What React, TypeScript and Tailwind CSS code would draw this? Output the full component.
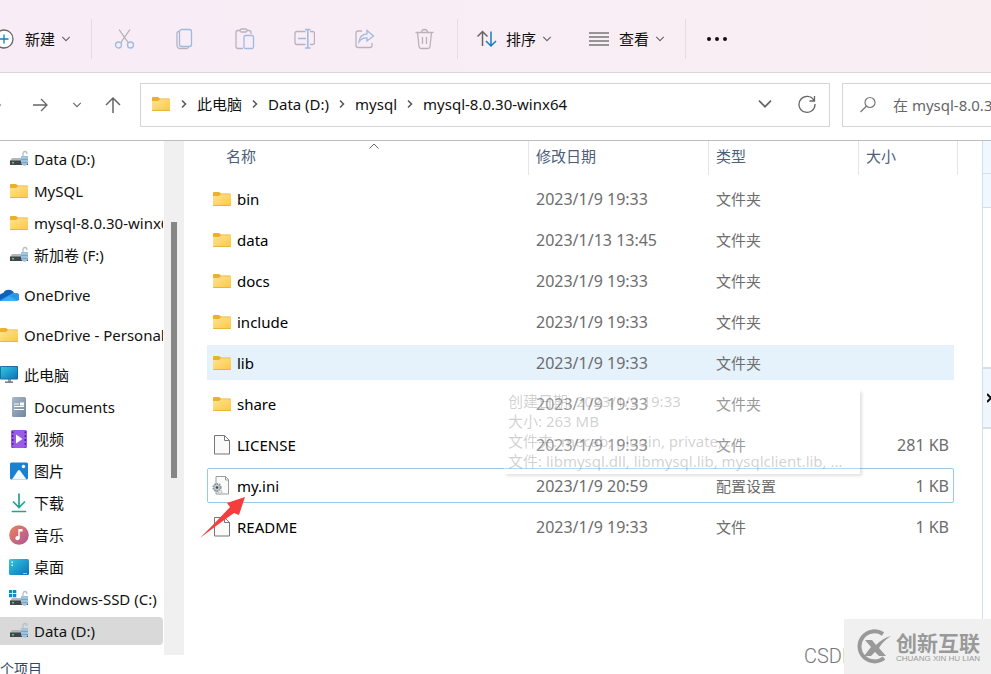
import type { ReactNode } from 'react';

type IconProps = { className?: string };

const Chevron = ({ className = '' }: IconProps) => (
  <svg viewBox="0 0 12 12" fill="none" stroke="currentColor" strokeWidth="1.300" className={`shrink-0 ${className}`}>
    <path d="M1.500 3.500 6 8l4.500-4.500" />
  </svg>
);

const CrumbArrow = () => (
  <svg viewBox="0 0 8 12" fill="none" stroke="#555" strokeWidth="1.500" className="h-3 w-2 shrink-0">
    <path d="M2 2.500 5.500 6 2 9.500" />
  </svg>
);

// clipped: the root nodes of the sidebar touch the window edge
const FolderIcon = ({ clipped = false }: { clipped?: boolean }) => (
  <svg viewBox={clipped ? '1 0 19 16' : '0 0 20 16'} className={`h-4 shrink-0 ${clipped ? 'w-[19px]' : 'w-5'}`}>
    <defs>
      <linearGradient id="folder" x1="0" y1="0" x2="1" y2="1">
        <stop offset="0" stopColor="#ffe394" />
        <stop offset="1" stopColor="#fbc843" />
      </linearGradient>
    </defs>
    <path d="M1 2q0-1 1-1h5l2 1.500h9q1 0 1 1V8H1z" fill="#ecb02c" />
    <path d="M1 5h6l2-1.800h10V14q0 1-1 1H2q-1 0-1-1z" fill="url(#folder)" />
    <path d="M1 14h18q0 1-1 1H2q-1 0-1-1z" fill="#eab53a" />
  </svg>
);

const DriveIcon = ({ system = false }: { system?: boolean }) => (
  <svg viewBox="0 0 20 18" className="h-[18px] w-5 shrink-0">
    <path d="M3 8h14l2 3H1z" fill="#b3b7bb" />
    <path d="M1 10.500h18V15H1z" fill="#40464b" />
    <path d="M3 12h2v1.500H3z" fill="#59d06b" />
    <path d="M14 7V4q0-2.500 2-2.500T18 4" fill="none" stroke="#b4c2cc" strokeWidth="1.300" />
    <path d="M12 6h7v7q-1 2.500-3.500 3Q13 15.500 12 13z" fill="#9fc3dc" />
    <path d="M12 9.500h7M12 12.500h7" stroke="#6f9dbd" strokeWidth=".8" />
    {system && (
      <path d="M0 0h3.300v3.300H0zM4 0h3.300v3.300H4zM0 4h3.300v3.300H0zM4 4h3.300v3.300H4z" fill="#1389c4" />
    )}
  </svg>
);

const CloudIcon = () => (
  <svg viewBox="1 0 19 14" className="h-3.5 w-[19px] shrink-0">
    <path d="M1 13V6.500Q2.500 5 4.300 5A6 6 0 0 1 15 5l1 8z" fill="#0d62bd" />
    <path d="M1 12 12 6q2-2 4-.8a4 4 0 0 1 3 7.300q-1 .5-2 .5H1z" fill="#2997e6" />
    <path d="m3 12.500 7-4.500 8.500 4.500q-1 .5-2 .5H4z" fill="#36b1f1" />
  </svg>
);

const PcIcon = () => (
  <svg viewBox="1 0 19 18" className="h-[18px] w-[19px] shrink-0">
    <defs>
      <linearGradient id="screen" x1="0" y1="0" x2="1" y2="1">
        <stop offset="0" stopColor="#32c8dc" />
        <stop offset="1" stopColor="#0b72bd" />
      </linearGradient>
    </defs>
    <path d="M9 13h3v3H9z" fill="#9aa5ad" />
    <path d="M6 15.500h8v1.200H6z" fill="#53616b" />
    <rect x="1" y="0" width="18" height="13.500" rx="1" fill="#17618f" />
    <rect x="1.800" y=".8" width="16.400" height="11.900" fill="url(#screen)" />
  </svg>
);

const DocumentsIcon = () => (
  <svg viewBox="0 0 20 20" className="size-5 shrink-0">
    <defs>
      <linearGradient id="doc" x1="0" y1="0" x2="1" y2="1">
        <stop offset="0" stopColor="#a9b9ca" />
        <stop offset="1" stopColor="#71869e" />
      </linearGradient>
    </defs>
    <rect x="3" y="0" width="14" height="20" rx="1.500" fill="url(#doc)" />
    <path d="M5 7h5M5 9.500h10M5 12.500h10" stroke="#fff" strokeWidth="1.200" />
    <rect x="11" y="5.500" width="4" height="3" fill="#fff" />
  </svg>
);

const VideoIcon = () => (
  <svg viewBox="0 0 20 20" className="size-5 shrink-0">
    <rect x="2" y="1" width="16" height="18" rx="1.500" fill="#9a5ce6" />
    <path d="M3.700 2.500v16M16.300 2.500v16" stroke="#4a2390" strokeWidth="1.600" strokeDasharray="1.800 2" />
    <path d="M7 5.500 13.500 10 7 14.500z" fill="#fff" />
  </svg>
);

const PicturesIcon = () => (
  <svg viewBox="0 0 20 20" className="size-5 shrink-0">
    <rect x="1" y="1.500" width="18" height="17" rx="1.500" fill="#1b80cf" />
    <path d="m3 18.500 6-9q1-1 2 0l6.500 9z" fill="#f2f9ff" />
    <circle cx="14.500" cy="5.500" r="1.700" fill="#fff" />
  </svg>
);

const DownloadIcon = () => (
  <svg viewBox="0 0 20 20" fill="none" stroke="#1fa58c" strokeWidth="1.700" strokeLinecap="round" className="size-5 shrink-0">
    <path d="M10 1v13M4.500 9l5.500 5.500L15.500 9M3.500 18.500h13" />
  </svg>
);

const MusicIcon = () => (
  <svg viewBox="0 0 20 20" className="size-5 shrink-0">
    <defs>
      <linearGradient id="music" x1="0" y1="0" x2="1" y2="1">
        <stop offset="0" stopColor="#ee8355" />
        <stop offset="1" stopColor="#a9559f" />
      </linearGradient>
    </defs>
    <circle cx="10" cy="10" r="9.800" fill="url(#music)" />
    <path d="M10 4v9" stroke="#fff" strokeWidth="1.400" />
    <path d="M10 4h3.500v2.500H10z" fill="#fff" />
    <circle cx="8.500" cy="13.200" r="2.100" fill="#fff" />
  </svg>
);

const DesktopIcon = () => (
  <svg viewBox="0 0 20 18" className="h-[18px] w-5 shrink-0">
    <rect x="0" y="1" width="20" height="16" rx="1.500" fill="url(#screen)" />
    <path d="M2.500 3.500h1.500v1.500H2.500zM2.500 6.500h1.500V8H2.500z" fill="#fff" />
    <path d="M14.500 15.500h1.200M16.500 15.500h1.200" stroke="#fff" />
  </svg>
);

const FileIcon = ({ gear = false }: { gear?: boolean }) => (
  <svg viewBox="0 0 20 22" fill="none" className="h-[22px] w-5 shrink-0">
    {gear ? (
      <>
        <path d="M4 1.500h9.500l3 3V19H4z" fill="#fafafa" stroke="#989ca0" />
        <path d="M13.500 1.500v3.500h3" stroke="#989ca0" />
        <circle cx="5" cy="12.500" r="3.600" fill="#c9d0d4" stroke="#8b9499" strokeWidth="2" strokeDasharray="1.500 .8" />
        <circle cx="5" cy="12.500" r="1.300" fill="#39444a" />
        <circle cx="8" cy="17" r="2" fill="#dfe3e5" stroke="#a3abb0" strokeDasharray="1 .6" />
      </>
    ) : (
      <path d="M2.500 1.500h10l5 5v13.500h-15zM12.500 1.500v5h5" fill="#fafafa" stroke="#777" />
    )}
  </svg>
);

const tools: { label: string; icon: ReactNode }[] = [
  {
    label: '剪切',
    icon: (
      <>
        <path d="M5 1.500 14.500 15M16 1.500 6.500 15" stroke="#b3adb8" />
        <circle cx="4.500" cy="17" r="3" stroke="#9dbbe0" />
        <circle cx="16.500" cy="17" r="3" stroke="#9dbbe0" />
      </>
    ),
  },
  {
    label: '复制',
    icon: (
      <>
        <path d="M5 3.500q-2 0-2 2V17q0 3.500 3.500 3.500h6q2 0 2-1.500" stroke="#b8b2be" />
        <rect x="5.500" y="1.500" width="12" height="17" rx="2" stroke="#9dbbe0" />
      </>
    ),
  },
  {
    label: '粘贴',
    icon: (
      <>
        <path d="M9 20.500H4q-2 0-2-2V4.500q0-2 2-2h2M13 2.500h2q2 0 2 2V6" stroke="#b8b2be" />
        <rect x="6" y="1" width="7" height="3" rx="1.500" stroke="#b8b2be" />
        <rect x="10" y="7.500" width="9.500" height="13" rx="1.500" stroke="#9dbbe0" />
      </>
    ),
  },
  {
    label: '重命名',
    icon: (
      <>
        <path d="M11.500 3.500H3q-2 0-2 2v9q0 2 2 2h8.500M16 3.500h2.500q2 0 2 2v9q0 2-2 2H16" stroke="#b8b2be" />
        <path d="M11 1.500h5.500M11 20h5.500M13.800 1.500V20M4 10.500h8" stroke="#9dbbe0" strokeWidth="1.600" />
      </>
    ),
  },
  {
    label: '共享',
    icon: (
      <>
        <path d="M8 3H4Q2 3 2 5v12.500q0 2 2 2h12q2 0 2-2V15" stroke="#b8b2be" />
        <path d="M13 2.500 19.500 8 13 13v-3q-5-.5-8 4Q5.500 6.500 13 5.800z" stroke="#9dbbe0" />
      </>
    ),
  },
  {
    label: '删除',
    icon: (
      <path
        d="M1.500 4.500h18M7.500 4.500q0-3 3-3t3 3M3.500 4.500 5 18.500q.2 2 2 2h7q1.800 0 2-2l1.500-14M8.500 9v7M12.500 9v7"
        stroke="#b9b3b9"
      />
    ),
  },
];

interface NavItem {
  label: string;
  icon: ReactNode;
  root?: boolean;
  active?: boolean;
}

const navItems: NavItem[] = [
  { label: 'Data (D:)', icon: <DriveIcon /> },
  { label: 'MySQL', icon: <FolderIcon /> },
  { label: 'mysql-8.0.30-winx64', icon: <FolderIcon /> },
  { label: '新加卷 (F:)', icon: <DriveIcon /> },
  { label: 'OneDrive', icon: <CloudIcon />, root: true },
  { label: 'OneDrive - Personal', icon: <FolderIcon clipped />, root: true },
  { label: '此电脑', icon: <PcIcon />, root: true },
  { label: 'Documents', icon: <DocumentsIcon /> },
  { label: '视频', icon: <VideoIcon /> },
  { label: '图片', icon: <PicturesIcon /> },
  { label: '下载', icon: <DownloadIcon /> },
  { label: '音乐', icon: <MusicIcon /> },
  { label: '桌面', icon: <DesktopIcon /> },
  { label: 'Windows-SSD (C:)', icon: <DriveIcon system /> },
  { label: 'Data (D:)', icon: <DriveIcon />, active: true },
  { label: '新加卷 (F:)', icon: <DriveIcon /> },
];

interface FileRow {
  name: string;
  date: string;
  type: string;
  size?: string;
}

const files: FileRow[] = [
  { name: 'bin', date: '2023/1/9 19:33', type: '文件夹' },
  { name: 'data', date: '2023/1/13 13:45', type: '文件夹' },
  { name: 'docs', date: '2023/1/9 19:33', type: '文件夹' },
  { name: 'include', date: '2023/1/9 19:33', type: '文件夹' },
  { name: 'lib', date: '2023/1/9 19:33', type: '文件夹' },
  { name: 'share', date: '2023/1/9 19:33', type: '文件夹' },
  { name: 'LICENSE', date: '2023/1/9 19:33', type: '文件', size: '281 KB' },
  { name: 'my.ini', date: '2023/1/9 20:59', type: '配置设置', size: '1 KB' },
  { name: 'README', date: '2023/1/9 19:33', type: '文件', size: '1 KB' },
];

const rowStyle = (name: string) => {
  if (name === 'lib') return 'bg-[#e5f2fc]';
  if (name === 'my.ini') return 'rounded-xs outline-1 -outline-offset-1 outline-[color:#99c9e6]';
  return '';
};

const Divider = () => <span className="h-10 w-px shrink-0 bg-[#e6dbe3]" />;

const CommandBar = () => (
  <header className="flex h-[73px] shrink-0 items-center border-b border-[#d9d5d9] bg-linear-to-r from-[#f8edf7] to-[#f9eef2] pb-1 pt-2.5">
    <button className="flex w-[91px] items-center">
      <svg viewBox="6 0 14 20" fill="none" className="h-5 w-3.5">
        <circle cx="10" cy="10" r="9" fill="#fff" stroke="#666" strokeWidth="1.300" />
        <path d="M10 5.500v9M5.500 10h9" stroke="#1181c4" strokeWidth="1.300" />
      </svg>
      <span className="ml-[11px]">新建</span>
      <Chevron className="ml-1.5 size-2.5 text-[#666]" />
    </button>
    <Divider />
    <div className="flex pl-0.5 pr-[3px]">
      {tools.map((tool) => (
        <button key={tool.label} aria-label={tool.label} className="flex w-[60px] justify-center">
          <svg viewBox="0 0 21 22" fill="none" strokeWidth="1.300" className="h-[22px] w-[21px]">
            {tool.icon}
          </svg>
        </button>
      ))}
    </div>
    <Divider />
    <button className="ml-4 flex w-[115px] items-center pl-0.5">
      <svg viewBox="0 0 22 20" fill="none" strokeWidth="1.500" className="h-5 w-[22px]">
        <path d="M6.500 17V2.500M1.500 7.500l5-5 5 5" stroke="#666" />
        <path d="M15 2.500V17M10 12l5 5 5-5" stroke="#1181c4" />
      </svg>
      <span className="ml-2">排序</span>
      <Chevron className="ml-1.5 size-2.5 text-[#666]" />
    </button>
    <button className="flex w-24 items-center">
      <svg viewBox="0 0 20 16" stroke="#777" strokeWidth="1.300" className="h-4 w-5">
        <path d="M0 2h20M0 6h20M0 10h20M0 14h20" />
      </svg>
      <span className="ml-2.5">查看</span>
      <Chevron className="ml-1.5 size-2.5 text-[#666]" />
    </button>
    <Divider />
    <button aria-label="更多" className="flex w-[62px] justify-center">
      <svg viewBox="0 0 22 6" fill="#111" className="h-1.5 w-[22px]">
        <circle cx="3" cy="3" r="2" />
        <circle cx="11" cy="3" r="2" />
        <circle cx="19" cy="3" r="2" />
      </svg>
    </button>
  </header>
);

const crumbs = ['此电脑', 'Data (D:)', 'mysql', 'mysql-8.0.30-winx64'];

const AddressBar = () => (
  <div className="flex h-[68px] shrink-0 items-start border-b border-[#bdbdbd] pt-2.5">
    <nav className="flex h-11 w-[140px] shrink-0 items-center text-[#666]">
      <button aria-label="后退" className="w-8">
        <svg viewBox="0 0 4 4" fill="#aaa" className="size-1">
          <circle cx="0" cy="2" r="1.200" />
        </svg>
      </button>
      <button aria-label="前进">
        <svg viewBox="0 0 16 16" fill="none" stroke="currentColor" strokeWidth="1.300" className="size-4">
          <path d="M1 8h14M9 2l6 6-6 6" />
        </svg>
      </button>
      <button aria-label="最近" className="ml-6">
        <Chevron className="size-2.5" />
      </button>
      <button aria-label="向上" className="ml-[22px]">
        <svg viewBox="0 0 18 18" fill="none" stroke="currentColor" strokeWidth="1.500" className="size-[18px]">
          <path d="M9 17V2M2 9l7-7 7 7" />
        </svg>
      </button>
    </nav>
    <div className="flex h-11 min-w-0 flex-1 items-center border border-[#d5d5d5] pb-0.5 pl-2.5 pr-3">
      <FolderIcon />
      {crumbs.map((crumb) => (
        <div key={crumb} className="flex items-center whitespace-nowrap">
          <span className="mx-[9px]">
            <CrumbArrow />
          </span>
          <button>{crumb}</button>
        </div>
      ))}
      <button aria-label="历史" className="ml-auto text-[#666]">
        <Chevron className="size-4" />
      </button>
      <button aria-label="刷新" className="ml-6">
        <svg viewBox="0 0 20 20" fill="none" stroke="#666" strokeWidth="1.300" className="size-5">
          <path d="M17 6.500A8 8 0 1 0 18 10M17.500 2v5h-5" />
        </svg>
      </button>
    </div>
    <label className="ml-3 flex h-11 w-[149px] shrink-0 items-center overflow-hidden border border-r-0 border-[#d5d5d5] pl-4">
      <svg viewBox="0 0 18 18" fill="none" stroke="#777" strokeWidth="1.200" className="size-[18px] shrink-0">
        <circle cx="11" cy="6.500" r="5" />
        <path d="M7.500 10 1.500 16" />
      </svg>
      <input
        type="text"
        aria-label="搜索"
        placeholder="在 mysql-8.0.30-winx64 中搜索"
        className="ml-4 w-60 shrink-0 outline-none placeholder:text-[#666]"
      />
    </label>
  </div>
);

const Sidebar = () => (
  <aside className="flex w-[184px] shrink-0 overflow-hidden">
    <ul className="w-[164px] shrink-0 overflow-hidden pt-0.5">
      {navItems.map((item, i) => (
        <li key={i} className={`flex h-8 items-center ${item.root ? 'mt-2' : ''}`}>
          <a
            href="#"
            className={`mr-px flex h-7 w-full items-center gap-[5px] overflow-hidden whitespace-nowrap rounded-r-sm ${
              item.root ? '' : 'pl-[9px]'
            } ${item.active ? 'bg-[#d9d9d9]' : ''}`}
          >
            {item.icon}
            {item.label}
          </a>
        </li>
      ))}
    </ul>
    <div className="flex-1 bg-[#f0f0f0] pt-[81px]">
      <div className="ml-[7px] h-64 w-1.5 bg-[#868686]" />
    </div>
  </aside>
);

const headers = ['名称', '修改日期', '类型', '大小'];

const FileTable = () => (
  <table className="w-full table-fixed border-separate border-spacing-0">
    <colgroup>
      <col />
      <col className="w-[180px]" />
      <col className="w-[150px]" />
      <col className="w-24" />
    </colgroup>
    <thead>
      <tr className="h-[34px] text-left text-[#4c607a]">
        {headers.map((header, i) => (
          <th key={header} className={`relative pb-1 font-normal ${i === 0 ? 'pl-[19px]' : 'pl-2'}`}>
            {header}
            {i === 0 && (
              <svg
                viewBox="0 0 10 6"
                fill="none"
                stroke="#666"
                className="absolute left-1/2 top-0.5 ml-px h-1.5 w-2.5"
              >
                <path d="M.5 5.500 5 1l4.500 4.500" />
              </svg>
            )}
            <span className={`absolute inset-y-0 w-px bg-[#e5e5e5] ${i === 3 ? '-right-1' : '-right-px'}`} />
          </th>
        ))}
      </tr>
    </thead>
    {files.map((file) => (
      <tbody key={file.name}>
        <tr className="h-1.5" />
        <tr className={`h-[35px] text-[#6d6d6d] ${rowStyle(file.name)}`}>
          <td className="p-0">
            <div className="flex items-center gap-[5px] pl-[5px] text-black">
              {file.type === '文件夹' ? <FolderIcon /> : <FileIcon gear={file.name === 'my.ini'} />}
              {file.name}
            </div>
          </td>
          <td className="py-0 pl-2 text-base leading-5">{file.date}</td>
          <td className="py-0 pl-2">{file.type}</td>
          <td className="py-0 pr-[5px] text-right text-base leading-5">{file.size}</td>
        </tr>
      </tbody>
    ))}
  </table>
);

const FolderTooltip = () => (
  <div className="absolute left-[320px] top-[249px] w-[356px] whitespace-nowrap bg-white/30 pb-[3px] pl-1 pt-px leading-5 text-[#444]/25 shadow-[2px_2px_3px_rgba(0,0,0,0.12)]">
    <p>创建日期: 2023/1/9 19:33</p>
    <p>大小: 263 MB</p>
    <p>文件夹: mecab, plugin, private, ...</p>
    <p>文件: libmysql.dll, libmysql.lib, mysqlclient.lib, ...</p>
  </div>
);

const Watermark = () => (
  <div className="absolute bottom-0 right-0 flex items-end">
    <span className="w-10 overflow-hidden pb-1.5 font-['Roboto',sans-serif] text-xl font-light leading-6 text-[#777]">
      CSDN
    </span>
    <div className="flex h-[55px] w-[147px] items-center gap-1 bg-[#f0f0f0] pl-3 text-[#999]">
      <svg viewBox="0 0 36 36" fill="none" className="size-9 shrink-0">
        <path d="M27 5A15 15 0 1 0 28 29" stroke="#999" strokeWidth="4" />
        <path d="M9 11h7l4 5q7-7 15-9-8 5-12 12l7 8h-7l-4-4-4 4H8l7-9z" fill="#999" />
      </svg>
      <div className="whitespace-nowrap">
        <p className="text-[21px] font-bold leading-6">创新互联</p>
        <p className="font-['Liberation_Sans',sans-serif] text-[8px] leading-2">CHUANG XIN HU LIAN</p>
      </div>
    </div>
  </div>
);

const App = () => (
  <div className="relative flex h-screen flex-col overflow-hidden bg-white font-['Noto_Sans','Noto_Sans_CJK_SC',sans-serif] text-[15px] leading-5 text-[#111]">
    <CommandBar />
    <AddressBar />
    <div className="flex min-h-0 flex-1">
      <Sidebar />
      <main className="relative min-w-0 flex-1 pl-[23px] pr-7">
        <FileTable />
        <FolderTooltip />
        <svg viewBox="0 0 48 44" className="absolute left-4 top-[355px] h-11 w-12">
          <path d="M45 1 27 7l3 4Q19 23 0 42q17-13 34-25l5 2z" fill="#f53d3d" />
        </svg>
      </main>
      <aside className="w-[9px] shrink-0 border-l border-[#d5dfe8]">
        <div className="h-[33px] border-b border-[#d5dfe8] bg-[#f0f7fe]" />
        <div className="h-[34px] border-b border-[#d5dfe8] bg-[#f0f7fe]" />
        <div className="mt-[159px] flex h-[62px] items-center justify-end border-y-2 border-[#d5dfec] bg-[#f0f6fd]">
          <svg viewBox="0 0 4 10" fill="none" stroke="#111" strokeWidth="2" className="h-2.5 w-1">
            <path d="m0 1 4 4-4 4" />
          </svg>
        </div>
      </aside>
    </div>
    <footer className="flex h-[19px] shrink-0 items-start overflow-hidden pt-1 text-sm text-[#33475f]">个项目</footer>
    <Watermark />
  </div>
);

export default App;
